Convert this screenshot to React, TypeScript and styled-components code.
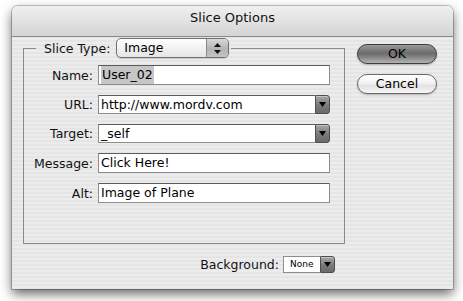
import React from 'react';
import styled, { createGlobalStyle, css } from 'styled-components';

const GlobalStyle = createGlobalStyle`
  html, body {
    margin: 0;
    padding: 0;
    background: #ffffff;
  }
  body {
    width: 463px;
    height: 301px;
    overflow: hidden;
    font-family: "DejaVu Sans", "Liberation Sans", sans-serif;
    color: #111;
  }
`;

const Window = styled.div`
  display: flex;
  flex-direction: column;
  width: 441px;
  height: 283px;
  margin: 6px 0 0 12px;
  border-radius: 6px 6px 0 0;
  background: repeating-linear-gradient(
    to bottom,
    #ececec 0,
    #ececec 2px,
    #e5e5e5 2px,
    #e5e5e5 4px
  );
  box-shadow: 0 0 0 1px rgba(0, 0, 0, 0.22), 0 5px 12px rgba(0, 0, 0, 0.6);
`;

const TitleBar = styled.div`
  box-sizing: border-box;
  height: 31px;
  padding-top: 4px;
  border-radius: 6px 6px 0 0;
  border-bottom: 1px solid #8a8a8a;
  background: linear-gradient(to bottom, #f0f0f0, #d4d4d4);
  text-align: center;
  font-size: 13px;
  line-height: 16px;
  color: #111;
`;

const Body = styled.div`
  display: flex;
  padding: 1px 0 0 11px;
`;

const LeftColumn = styled.div`
  display: flex;
  flex-direction: column;
  width: 322px;
`;

const GroupBox = styled.fieldset`
  box-sizing: border-box;
  width: 322px;
  min-width: 0;
  margin: 0;
  padding: 7px 14px 40px 0;
  border: 1px solid #8a8a8a;
`;

const Legend = styled.legend`
  margin-left: 12px;
  padding: 0 2px 0 8px;
`;

const LegendInner = styled.div`
  display: flex;
  align-items: center;
  gap: 6px;
  font-size: 12.5px;
`;

const FieldGrid = styled.div`
  display: grid;
  grid-template-columns: 69px 232px;
  column-gap: 5px;
  row-gap: 10px;
  align-items: center;
`;

const Label = styled.div`
  text-align: right;
  font-size: 12.5px;
  white-space: nowrap;
`;

const fieldBase = css`
  box-sizing: border-box;
  height: 20px;
  padding: 0 2px;
  border: 1px solid #8d8d8d;
  border-top-color: #5c5c5c;
  background: #fff;
  font-size: 12.5px;
  line-height: 18px;
  color: #000;
  white-space: nowrap;
  overflow: hidden;
`;

const TextField = styled.div`
  ${fieldBase}
`;

const Selected = styled.span`
  background: #c6c6c6;
  padding: 1px 1px 2px;
`;

const Combo = styled.div`
  display: flex;
  align-items: stretch;
  height: 19px;
`;

const ComboField = styled.div`
  ${fieldBase}
  flex: 1;
  height: 19px;
  line-height: 17px;
  border-right: none;
`;

const ArrowButton = styled.div<{ $small?: boolean }>`
  box-sizing: border-box;
  display: flex;
  align-items: center;
  justify-content: center;
  width: 15px;
  border: 1px solid #4e4e4e;
  border-radius: 0 3px 3px 0;
  background: linear-gradient(to bottom, #a8a8a8, #7a7a7a 55%, #6a6a6a);
  box-shadow: inset 0 1px 0 rgba(255, 255, 255, 0.35);
`;

const Popup = styled.div`
  box-sizing: border-box;
  display: flex;
  width: 113px;
  height: 20px;
  border: 1px solid #6f6f6f;
  border-radius: 5px;
  overflow: hidden;
  background: linear-gradient(to bottom, #ffffff, #f1f1f1 50%, #e6e6e6);
  box-shadow: 0 1px 1px rgba(0, 0, 0, 0.15);
`;

const PopupText = styled.div`
  flex: 1;
  padding-left: 7px;
  font-size: 12.5px;
  line-height: 18px;
  color: #000;
`;

const PopupStepper = styled.div`
  display: flex;
  align-items: center;
  justify-content: center;
  width: 21px;
  border-left: 1px solid #8a8a8a;
  background: linear-gradient(to bottom, #d8d8d8, #b4b4b4 55%, #c4c4c4);
`;

const RightColumn = styled.div`
  display: flex;
  flex-direction: column;
  gap: 10px;
  width: 80px;
  margin-left: 12px;
  padding-top: 6px;
`;

const PillButton = styled.div<{ $default?: boolean }>`
  box-sizing: border-box;
  height: 20px;
  border-radius: 10px;
  border: 1px solid ${({ $default }) => ($default ? '#3e3e3e' : '#6a6a6a')};
  background: ${({ $default }) =>
    $default
      ? 'linear-gradient(to bottom, #9a9a9a 0%, #6c6c6c 45%, #7a7a7a 60%, #b2b2b2 100%)'
      : 'linear-gradient(to bottom, #ffffff 0%, #f2f2f2 45%, #e2e2e2 60%, #f6f6f6 100%)'};
  box-shadow: 0 1px 2px rgba(0, 0, 0, 0.25);
  text-align: center;
  font-size: 12.5px;
  line-height: 18px;
  color: #000;
`;

const BottomRow = styled.div`
  display: flex;
  justify-content: flex-end;
  align-items: center;
  gap: 4px;
  margin-top: 12px;
  padding-right: 10px;
`;

const SmallCombo = styled.div`
  display: flex;
  width: 52px;
  height: 17px;
`;

const SmallField = styled.div`
  box-sizing: border-box;
  flex: 1;
  padding-left: 6px;
  border: 1px solid #8d8d8d;
  border-right: none;
  background: #fff;
  font-size: 9px;
  line-height: 15px;
  color: #000;
`;

const DownTriangle = () => (
  <svg width="7" height="5" viewBox="0 0 7 5">
    <path d="M0 0 H7 L3.5 5 Z" fill="#000" />
  </svg>
);

const UpDown = () => (
  <svg width="7" height="11" viewBox="0 0 7 11">
    <path d="M3.5 0 L7 4 H0 Z" fill="#111" />
    <path d="M0 7 H7 L3.5 11 Z" fill="#111" />
  </svg>
);

type FieldRow = {
  label: string;
  value: string;
  kind: 'text' | 'combo' | 'selected';
};

const rows: FieldRow[] = [
  { label: 'Name:', value: 'User_02', kind: 'selected' },
  { label: 'URL:', value: 'http://www.mordv.com', kind: 'combo' },
  { label: 'Target:', value: '_self', kind: 'combo' },
  { label: 'Message:', value: 'Click Here!', kind: 'text' },
  { label: 'Alt:', value: 'Image of Plane', kind: 'text' },
];

const App: React.FC = () => {
  return (
    <>
      <GlobalStyle />
      <Window>
        <TitleBar>Slice Options</TitleBar>
        <Body>
          <LeftColumn>
            <GroupBox>
              <Legend>
                <LegendInner>
                  <span>Slice Type:</span>
                  <Popup>
                    <PopupText>Image</PopupText>
                    <PopupStepper>
                      <UpDown />
                    </PopupStepper>
                  </Popup>
                </LegendInner>
              </Legend>
              <FieldGrid>
                {rows.map((row) => (
                  <React.Fragment key={row.label}>
                    <Label>{row.label}</Label>
                    {row.kind === 'combo' ? (
                      <Combo>
                        <ComboField>{row.value}</ComboField>
                        <ArrowButton>
                          <DownTriangle />
                        </ArrowButton>
                      </Combo>
                    ) : row.kind === 'selected' ? (
                      <TextField>
                        <Selected>{row.value}</Selected>
                      </TextField>
                    ) : (
                      <TextField>{row.value}</TextField>
                    )}
                  </React.Fragment>
                ))}
              </FieldGrid>
            </GroupBox>
            <BottomRow>
              <Label>Background:</Label>
              <SmallCombo>
                <SmallField>None</SmallField>
                <ArrowButton>
                  <DownTriangle />
                </ArrowButton>
              </SmallCombo>
            </BottomRow>
          </LeftColumn>
          <RightColumn>
            <PillButton $default>OK</PillButton>
            <PillButton>Cancel</PillButton>
          </RightColumn>
        </Body>
      </Window>
    </>
  );
};

export default App;
